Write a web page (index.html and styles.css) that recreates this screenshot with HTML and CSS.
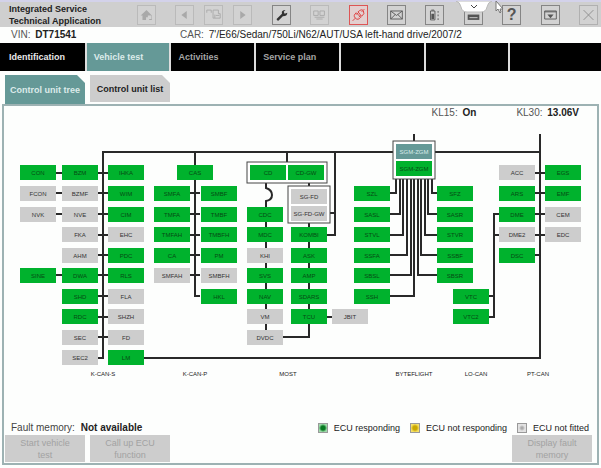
FILE: index.html
```html
<!DOCTYPE html>
<html lang="en">
<head>
<meta charset="utf-8">
<title>Integrated Service Technical Application</title>
<link rel="stylesheet" href="styles.css">
</head>
<body>
<header class="top">
  <h1 class="brand">Integrated Service<br>Technical Application</h1>
  <div class="toolbar">
    <button class="tool faded" aria-label="Home"><svg viewBox="0 0 19 19"><path class="fill" d="M3 10 9.500 4l6 6v5h-3v-3H9v3H5v-5z"/><path class="light" d="M11 10h4v4h-4z"/></svg></button>
    <div class="history">
      <button class="tool faded" aria-label="Back"><svg viewBox="0 0 19 19"><path class="fill" d="M12 5v9L6 9.500z"/></svg></button>
      <button class="tool faded" aria-label="Pages"><svg viewBox="0 0 19 19"><path d="M2 7V4h5v3M9 4h6v4h2v5h-6V9M9 4v9h2M12 10h4"/></svg></button>
      <button class="tool faded" aria-label="Forward"><svg viewBox="0 0 19 19"><path class="fill" d="M7 5v9l6-4.500z"/></svg></button>
    </div>
    <button class="tool dark" aria-label="Settings"><svg viewBox="0 0 19 19"><path class="fill" d="m4 14 6-6q-1-4 4-4l-2 2 1 2 3-1q0 4-5 4l-5 5q-2 0-2-2z"/></svg></button>
    <button class="tool faded" aria-label="Identify vehicle"><svg viewBox="0 0 19 19"><path d="M3 5h5v5H3zM10 5h5v5h-5zM4 12h11M6 14h7"/></svg></button>
    <button class="tool red" aria-label="Connection"><svg viewBox="0 0 19 19"><path d="m3 16 3-3M16 3l-3 3M6 13q-3-3 1-6l5 5q-3 4-6 1zM9 6q4-4 6-1t-2 6zM7 9l2-2M10 12l2-2"/></svg></button>
    <button class="tool" aria-label="Messages"><svg viewBox="0 0 19 19"><path d="M3 5h13v9H3zM3 5l6.500 5L16 5M3 14l5-5M16 14l-5-5"/></svg></button>
    <button class="tool" aria-label="Battery"><svg viewBox="0 0 19 19"><path d="M5 5h5v10H5zM6 4h3"/><path class="fill" d="M6 8h3v6H6zM13 5h1v2h-1zM13 9h1v2h-1zM13 13h1v2h-1z"/></svg></button>
    <div class="tool-slot">
      <button class="tool" aria-label="Keyboard"><svg viewBox="0 0 19 19"><path class="fill" d="M3 9h13v6H3z"/><path class="light" d="M5 12h9v1H5z"/></svg></button>
      <button class="pulldown" aria-label="Show menu"><svg viewBox="0 0 36 12"><path class="flap" d="M0 0h36q-4 1-5 6t-6 5H11q-5 0-6-5T0 0z"/><path d="m15 4 3 3 3-3"/></svg></button>
      <svg class="pointer" viewBox="0 0 9 13"><path d="M1 0v10l2-2 2 4 1-1-1-3h3z"/></svg>
    </div>
    <button class="tool dark help" aria-label="Help">?</button>
    <button class="tool" aria-label="Minimise"><svg viewBox="0 0 19 19"><path d="M3 5h13v9H3zM3 6h13"/><path class="fill" d="M6 9h7l-3.500 4z"/></svg></button>
    <button class="tool mid" aria-label="Close"><svg viewBox="0 0 19 19"><path d="m4 4 11 11M15 4 4 15"/></svg></button>
  </div>
</header>

<div class="vehicle">
  <p class="vin">VIN: <strong>DT71541</strong></p>
  <p>CAR: <b>7'/E66/Sedan/750Li/N62/AUT/USA left-hand drive/2007/2</b></p>
</div>

<nav class="menu">
  <a class="done" href="#">Identification</a>
  <a class="current" href="#">Vehicle test</a>
  <a href="#">Activities</a>
  <a href="#">Service plan</a>
  <span></span><span></span><span></span>
</nav>

<main>
  <div class="tabs">
    <button class="tab active">Control unit tree</button>
    <button class="tab">Control unit list</button>
  </div>
  <section class="panel">
    <div class="terminals">
      <p>KL15: <strong>On</strong></p>
      <p>KL30: <strong>13.06V</strong></p>
    </div>

    <svg class="tree" viewBox="4 120 593 301" role="img" aria-label="Control unit tree">
      <defs><rect id="n" width="36" height="15"/></defs>
      <g class="wire">
        <path d="M98 357h5V151H540M540 133V357H144"/>
        <path d="M56 172h52M56 192h52M56 213h52M98 234h10M98 254h10M56 274h52M98 295h10M98 316h10M98 336h10"/>
        <path d="M195 151v144h5M190 192h10M190 213h10M190 234h10M190 254h10M190 274h10"/>
        <path d="M287 151v10M335 151v83h-8M330 212h5"/>
        <path d="M266 182v5q6 2 6 7t-6 6v136h43v-28M309 182v134h23"/>
        <path d="M414 133v8"/>
        <path d="M390 192h6v-14M390 213h10v-35M390 234h13v-56M390 254h17v-76M390 274h21v-96M390 295h24V178M437 192h-5v-14M437 213h-9v-35M437 234h-12v-56M437 254h-16v-76M437 274h-19v-96"/>
        <path d="M535 172h10M535 192h10M535 213h10M535 234h10M535 254h5M499 213h-5v103h-5M494 234h5M489 295h5"/>
      </g>
      <g class="frame">
        <rect x="247" y="161" width="80" height="21"/>
        <rect x="288" y="185" width="42" height="37"/>
        <rect x="393" y="140" width="42" height="38"/>
      </g>
      <g class="ok">
        <g transform="translate(20 164)"><use href="#n"/><text x="18" y="10">CON</text></g>
        <g transform="translate(62 164)"><use href="#n"/><text x="18" y="10">BZM</text></g>
        <g transform="translate(108 164)"><use href="#n"/><text x="18" y="10">IHKA</text></g>
        <g transform="translate(108 185)"><use href="#n"/><text x="18" y="10">WIM</text></g>
        <g transform="translate(108 206)"><use href="#n"/><text x="18" y="10">CIM</text></g>
        <g transform="translate(108 247)"><use href="#n"/><text x="18" y="10">PDC</text></g>
        <g transform="translate(20 267)"><use href="#n"/><text x="18" y="10">SINE</text></g>
        <g transform="translate(62 267)"><use href="#n"/><text x="18" y="10">DWA</text></g>
        <g transform="translate(108 267)"><use href="#n"/><text x="18" y="10">RLS</text></g>
        <g transform="translate(62 288)"><use href="#n"/><text x="18" y="10">SHD</text></g>
        <g transform="translate(62 308)"><use href="#n"/><text x="18" y="10">RDC</text></g>
        <g transform="translate(108 349)"><use href="#n"/><text x="18" y="10">LM</text></g>
        <g transform="translate(177 164)"><use href="#n"/><text x="18" y="10">CAS</text></g>
        <g transform="translate(154 185)"><use href="#n"/><text x="18" y="10">SMFA</text></g>
        <g transform="translate(201 185)"><use href="#n"/><text x="18" y="10">SMBF</text></g>
        <g transform="translate(154 206)"><use href="#n"/><text x="18" y="10">TMFA</text></g>
        <g transform="translate(201 206)"><use href="#n"/><text x="18" y="10">TMBF</text></g>
        <g transform="translate(154 226)"><use href="#n"/><text x="18" y="10">TMFAH</text></g>
        <g transform="translate(201 226)"><use href="#n"/><text x="18" y="10">TMBFH</text></g>
        <g transform="translate(154 247)"><use href="#n"/><text x="18" y="10">CA</text></g>
        <g transform="translate(201 247)"><use href="#n"/><text x="18" y="10">PM</text></g>
        <g transform="translate(201 288)"><use href="#n"/><text x="18" y="10">HKL</text></g>
        <g transform="translate(250 164)"><use href="#n"/><text x="18" y="10">CD</text></g>
        <g transform="translate(288 164)"><use href="#n"/><text x="18" y="10">CD-GW</text></g>
        <g transform="translate(247 206)"><use href="#n"/><text x="18" y="10">CDC</text></g>
        <g transform="translate(247 226)"><use href="#n"/><text x="18" y="10">MDC</text></g>
        <g transform="translate(247 267)"><use href="#n"/><text x="18" y="10">SVS</text></g>
        <g transform="translate(247 288)"><use href="#n"/><text x="18" y="10">NAV</text></g>
        <g transform="translate(291 226)"><use href="#n"/><text x="18" y="10">KOMBI</text></g>
        <g transform="translate(291 247)"><use href="#n"/><text x="18" y="10">ASK</text></g>
        <g transform="translate(291 267)"><use href="#n"/><text x="18" y="10">AMP</text></g>
        <g transform="translate(291 288)"><use href="#n"/><text x="18" y="10">SDARS</text></g>
        <g transform="translate(291 308)"><use href="#n"/><text x="18" y="10">TCU</text></g>
        <g transform="translate(396 160)"><use href="#n"/><text x="18" y="10">SGM-ZGM</text></g>
        <g transform="translate(354 185)"><use href="#n"/><text x="18" y="10">SZL</text></g>
        <g transform="translate(354 206)"><use href="#n"/><text x="18" y="10">SASL</text></g>
        <g transform="translate(354 226)"><use href="#n"/><text x="18" y="10">STVL</text></g>
        <g transform="translate(354 247)"><use href="#n"/><text x="18" y="10">SSFA</text></g>
        <g transform="translate(354 267)"><use href="#n"/><text x="18" y="10">SBSL</text></g>
        <g transform="translate(354 288)"><use href="#n"/><text x="18" y="10">SSH</text></g>
        <g transform="translate(437 185)"><use href="#n"/><text x="18" y="10">SFZ</text></g>
        <g transform="translate(437 206)"><use href="#n"/><text x="18" y="10">SASR</text></g>
        <g transform="translate(437 226)"><use href="#n"/><text x="18" y="10">STVR</text></g>
        <g transform="translate(437 247)"><use href="#n"/><text x="18" y="10">SSBF</text></g>
        <g transform="translate(437 267)"><use href="#n"/><text x="18" y="10">SBSR</text></g>
        <g transform="translate(453 288)"><use href="#n"/><text x="18" y="10">VTC</text></g>
        <g transform="translate(453 308)"><use href="#n"/><text x="18" y="10">VTC2</text></g>
        <g transform="translate(545 164)"><use href="#n"/><text x="18" y="10">EGS</text></g>
        <g transform="translate(499 185)"><use href="#n"/><text x="18" y="10">ARS</text></g>
        <g transform="translate(545 185)"><use href="#n"/><text x="18" y="10">EMF</text></g>
        <g transform="translate(499 206)"><use href="#n"/><text x="18" y="10">DME</text></g>
        <g transform="translate(499 247)"><use href="#n"/><text x="18" y="10">DSC</text></g>
      </g>
      <g class="selected" transform="translate(396 143)"><use href="#n"/><text x="18" y="10">SGM-ZGM</text></g>
      <g class="absent">
        <g transform="translate(20 185)"><use href="#n"/><text x="18" y="10">FCON</text></g>
        <g transform="translate(62 185)"><use href="#n"/><text x="18" y="10">BZMF</text></g>
        <g transform="translate(20 206)"><use href="#n"/><text x="18" y="10">NVK</text></g>
        <g transform="translate(62 206)"><use href="#n"/><text x="18" y="10">NVE</text></g>
        <g transform="translate(62 226)"><use href="#n"/><text x="18" y="10">FKA</text></g>
        <g transform="translate(108 226)"><use href="#n"/><text x="18" y="10">EHC</text></g>
        <g transform="translate(62 247)"><use href="#n"/><text x="18" y="10">AHM</text></g>
        <g transform="translate(108 288)"><use href="#n"/><text x="18" y="10">FLA</text></g>
        <g transform="translate(108 308)"><use href="#n"/><text x="18" y="10">SHZH</text></g>
        <g transform="translate(62 329)"><use href="#n"/><text x="18" y="10">SEC</text></g>
        <g transform="translate(108 329)"><use href="#n"/><text x="18" y="10">FD</text></g>
        <g transform="translate(62 349)"><use href="#n"/><text x="18" y="10">SEC2</text></g>
        <g transform="translate(154 267)"><use href="#n"/><text x="18" y="10">SMFAH</text></g>
        <g transform="translate(201 267)"><use href="#n"/><text x="18" y="10">SMBFH</text></g>
        <g transform="translate(291 188)"><use href="#n"/><text x="18" y="10">SG-FD</text></g>
        <g transform="translate(291 205)"><use href="#n"/><text x="18" y="10">SG-FD-GW</text></g>
        <g transform="translate(247 247)"><use href="#n"/><text x="18" y="10">KHI</text></g>
        <g transform="translate(247 308)"><use href="#n"/><text x="18" y="10">VM</text></g>
        <g transform="translate(247 329)"><use href="#n"/><text x="18" y="10">DVDC</text></g>
        <g transform="translate(332 308)"><use href="#n"/><text x="18" y="10">JBIT</text></g>
        <g transform="translate(499 164)"><use href="#n"/><text x="18" y="10">ACC</text></g>
        <g transform="translate(545 206)"><use href="#n"/><text x="18" y="10">CEM</text></g>
        <g transform="translate(499 226)"><use href="#n"/><text x="18" y="10">DME2</text></g>
        <g transform="translate(545 226)"><use href="#n"/><text x="18" y="10">EDC</text></g>
      </g>
      <g class="bus">
        <text x="103" y="375">K-CAN-S</text>
        <text x="195" y="375">K-CAN-P</text>
        <text x="288" y="375">MOST</text>
        <text x="414" y="375">BYTEFLIGHT</text>
        <text x="476" y="375">LO-CAN</text>
        <text x="538" y="375">PT-CAN</text>
      </g>
    </svg>

    <div class="status">
      <p>Fault memory: <strong>Not available</strong></p>
      <ul class="legend">
        <li><i class="key responding"></i>ECU responding</li>
        <li><i class="key silent"></i>ECU not responding</li>
        <li><i class="key missing"></i>ECU not fitted</li>
      </ul>
    </div>
    <div class="actions">
      <button disabled>Start vehicle<br>test</button>
      <button disabled>Call up ECU<br>function</button>
      <button class="last" disabled>Display fault<br>memory</button>
    </div>
  </section>
</main>
</body>
</html>
```
FILE: styles.css
```css
* { box-sizing: border-box; }
body {
  margin: 0;
  background: #fdfefd;
  color: #222;
  font: 10px/12px "Liberation Sans", Arial, sans-serif;
}
p, h1, ul { margin: 0; padding: 0; }
button { font: inherit; padding: 0; border: 0; }

.top {
  display: flex;
  align-items: center;
  height: 27px;
  padding-right: 3px;
  background: #cfcfcf;
  border-top: 2px solid #d3d2ea;
}
.brand {
  flex: 0 0 137px;
  padding-left: 9px;
  font-size: 9px;
  line-height: 12px;
  white-space: nowrap;
}
.toolbar {
  flex: 1;
  display: flex;
  justify-content: space-between;
}
.history { display: flex; gap: 10px; }
.tool {
  display: block;
  width: 19px;
  height: 20px;
  background: #d2d2d2;
  border: 1px solid #858585;
  color: #555;
}
.tool svg { display: block; width: 17px; height: 18px; }
.tool path, .pulldown path { fill: none; stroke: currentColor; }
.tool .fill { fill: currentColor; stroke: none; }
.tool .light { fill: #d2d2d2; stroke: none; }
.faded { color: #a9a9a9; border-color: #bababa; }
.mid { color: #8c8c8c; border-color: #b0b0b0; }
.dark { color: #333; }
.red { color: #d33; border-color: #d55; background: #e3cfcf; }
.help { font-size: 16px; line-height: 18px; font-weight: bold; color: #555; }
.tool-slot { position: relative; }
.pulldown {
  position: absolute;
  top: -4px;
  left: -8px;
  width: 36px;
  height: 12px;
  background: none;
  color: #444;
}
.pulldown svg { display: block; }
.pulldown .flap { fill: #fff; stroke: #bbb; }
.pointer {
  position: absolute;
  top: -4px;
  left: 31px;
  width: 9px;
  height: 13px;
  fill: #fff;
  stroke: #777;
}

.vehicle {
  display: flex;
  align-items: center;
  height: 16px;
  padding-left: 11px;
  color: #555;
}
.vehicle .vin { flex: 0 0 169px; }
.vehicle strong, .vehicle b { margin-left: 2px; color: #222; }
.vehicle b { font-weight: normal; }

.menu {
  display: grid;
  grid-template-columns: 85fr repeat(5, 83fr) 91fr;
  gap: 2px;
  height: 28px;
  background: #ddd;
}
.menu a, .menu span {
  padding-left: 7px;
  background: #000;
  color: #a5a5a5;
  font-size: 9px;
  font-weight: bold;
  line-height: 28px;
  text-decoration: none;
}
.menu .done { padding-left: 9px; color: #e8e8e8; }
.menu .current { background: #659997; color: #dcebea; }

main { padding: 4px 2px 0; }
.tabs { display: flex; align-items: flex-start; gap: 5px; padding-left: 3px; }
.tab {
  width: 80px;
  height: 27px;
  background: #cdcdcd;
  color: #222;
  font-size: 9px;
  font-weight: bold;
  white-space: nowrap;
  clip-path: polygon(0 0, 72px 0, 100% 8px, 100% 100%, 0 100%);
}
.tab.active { height: 29px; background: #659997; color: #dcebea; }

.panel { border: 2px solid #9db2b3; }
.terminals {
  display: flex;
  justify-content: flex-end;
  gap: 40px;
  padding: 1px 18px 0 0;
  height: 15px;
  color: #555;
}
.terminals strong { margin-left: 2px; color: #222; }

.tree { display: block; width: 100%; font-size: 6px; text-anchor: middle; }
.wire path { fill: none; stroke: #292929; stroke-width: 2px; }
.frame rect { fill: #fff; stroke: #444; stroke-width: 1px; }
.ok use { fill: #00b22d; }
.ok text { fill: #064c14; }
.absent use { fill: #cdcdcd; }
.absent text { fill: #333; }
.selected use { fill: #659997; }
.selected text { fill: #d8ecea; }
.bus text { fill: #222; }

.status {
  display: flex;
  justify-content: space-between;
  padding: 0 8px 1px 7px;
  color: #444;
}
.status strong { margin-left: 3px; color: #222; }
.legend { display: flex; gap: 10px; list-style: none; color: #222; font-size: 9px; }
.legend li { display: flex; align-items: center; }
.key {
  width: 10px;
  height: 10px;
  margin-right: 6px;
  border: 1px solid #999;
}
.responding { background: radial-gradient(circle, #087a22 2px, #9fdcab 4px); }
.silent { background: radial-gradient(circle, #c9a800 2px, #f7e26a 4px); }
.missing { background: radial-gradient(circle, #aaa 1px, #e2e2e2 3px); }

.actions { display: flex; gap: 5px; padding: 0 5px 1px 1px; }
.actions button {
  width: 80px;
  height: 27px;
  background: #cdcdcd;
  color: #a2a2a2;
  font-size: 9px;
}
.actions .last { margin-left: auto; }
```
